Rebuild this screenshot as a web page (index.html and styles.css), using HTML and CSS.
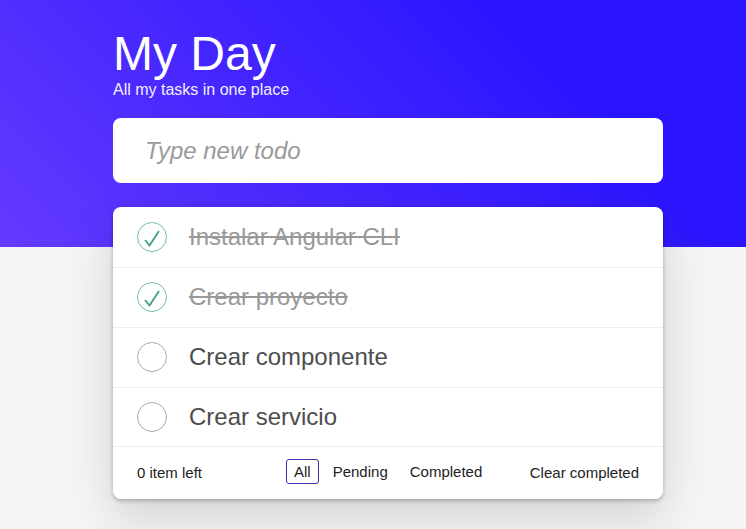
FILE: index.html
```html
<!DOCTYPE html>
<html>
<head>
    <title>My Day</title>
    <meta charset="utf-8"/>
    <link rel="stylesheet" href="styles.css">
</head>
<body>
<div class="hero"></div>
<div class="content">
    <header class="head">
        <h1>My Day</h1>
        <p>All my tasks in one place</p>
    </header>
    <input class="new-todo" type="text" placeholder="Type new todo"/>
    <section class="card">
        <ul class="list">
            <li class="todo done">
                <span class="check"><svg width="30" height="30" viewBox="0 0 30 30"><path d="M8 18 L12.5 23.5 L22 9"/></svg></span>
                <span class="label">Instalar Angular CLI</span>
            </li>
            <li class="todo done">
                <span class="check"><svg width="30" height="30" viewBox="0 0 30 30"><path d="M8 18 L12.5 23.5 L22 9"/></svg></span>
                <span class="label">Crear proyecto</span>
            </li>
            <li class="todo">
                <span class="check"></span>
                <span class="label">Crear componente</span>
            </li>
            <li class="todo">
                <span class="check"></span>
                <span class="label">Crear servicio</span>
            </li>
        </ul>
        <footer class="foot">
            <span class="count">0 item left</span>
            <nav class="filters">
                <a class="selected">All</a>
                <a>Pending</a>
                <a>Completed</a>
            </nav>
            <span class="clear">Clear completed</span>
        </footer>
    </section>
</div>
</body>
</html>
```
FILE: styles.css
```css
*{box-sizing: border-box}
html,body{
    margin: 0px;
    padding: 0px;
    height: 100%;
    overflow: hidden;
}
body{
    position: relative;
    background: #f5f5f5;
    font-family: "Liberation Sans", Arial, sans-serif;
    color: #4d4d4d;
}
.hero{
    position: absolute;
    top: 0;
    left: 0;
    width: 100%;
    height: 247px;
    background: linear-gradient(45deg, #643aff 0%, #2a14ff 76%, #2a14ff 100%);
}
.content{
    position: relative;
    width: 550px;
    margin-left: 113px;
    padding-top: 27px;
}
.head{
    color: #fff;
}
.head h1{
    margin: 0;
    font-size: 48px;
    font-weight: 400;
    line-height: 54px;
}
.head p{
    margin: 0;
    font-size: 16px;
    line-height: 18px;
    color: #f0eeff;
}
.new-todo{
    display: block;
    width: 100%;
    height: 65px;
    margin-top: 19px;
    padding: 0 32px;
    border: 0;
    border-radius: 8px;
    background: #fff;
    font: italic 24px "Liberation Sans", Arial, sans-serif;
    outline: none;
}
.new-todo::placeholder{
    color: #9a9a9a;
    opacity: 1;
}
.card{
    margin-top: 24px;
    background: #fff;
    border-radius: 8px;
    box-shadow: 0 2px 4px rgba(0,0,0,.25), 0 20px 50px rgba(0,0,0,.14);
}
.list{
    margin: 0;
    padding: 1px 0 0;
    list-style: none;
}
.todo{
    display: flex;
    align-items: center;
    gap: 22px;
    height: 60px;
    padding: 0 24px 1px;
    border-bottom: 1px solid #ededed;
    font-size: 24px;
}
.todo:last-child{
    height: 59px;
    padding-bottom: 0;
}
.check{
    flex: none;
    width: 30px;
    height: 30px;
    border: 1px solid #a8a8a8;
    border-radius: 50%;
}
.check svg{
    display: block;
    margin: -1px;
}
.check path{
    fill: none;
    stroke: #3f9f86;
    stroke-width: 1.8;
}
.done .check{
    border-color: #78b9a8;
}
.done .label{
    color: #999;
    text-decoration: line-through;
}
.foot{
    display: flex;
    align-items: center;
    height: 52px;
    padding: 0 24px 2px;
    font-size: 15px;
    color: #222;
}
.count{
    width: 149px;
}
.filters{
    display: flex;
    gap: 6px;
    margin-top: -2px;
}
.filters a{
    padding: 3px 7px;
    line-height: 17px;
    border: 1px solid transparent;
    border-radius: 3px;
}
.filters a.selected{
    border-color: #3f2fa8;
}
.clear{
    margin-left: auto;
    margin-top: 1px;
}
```
